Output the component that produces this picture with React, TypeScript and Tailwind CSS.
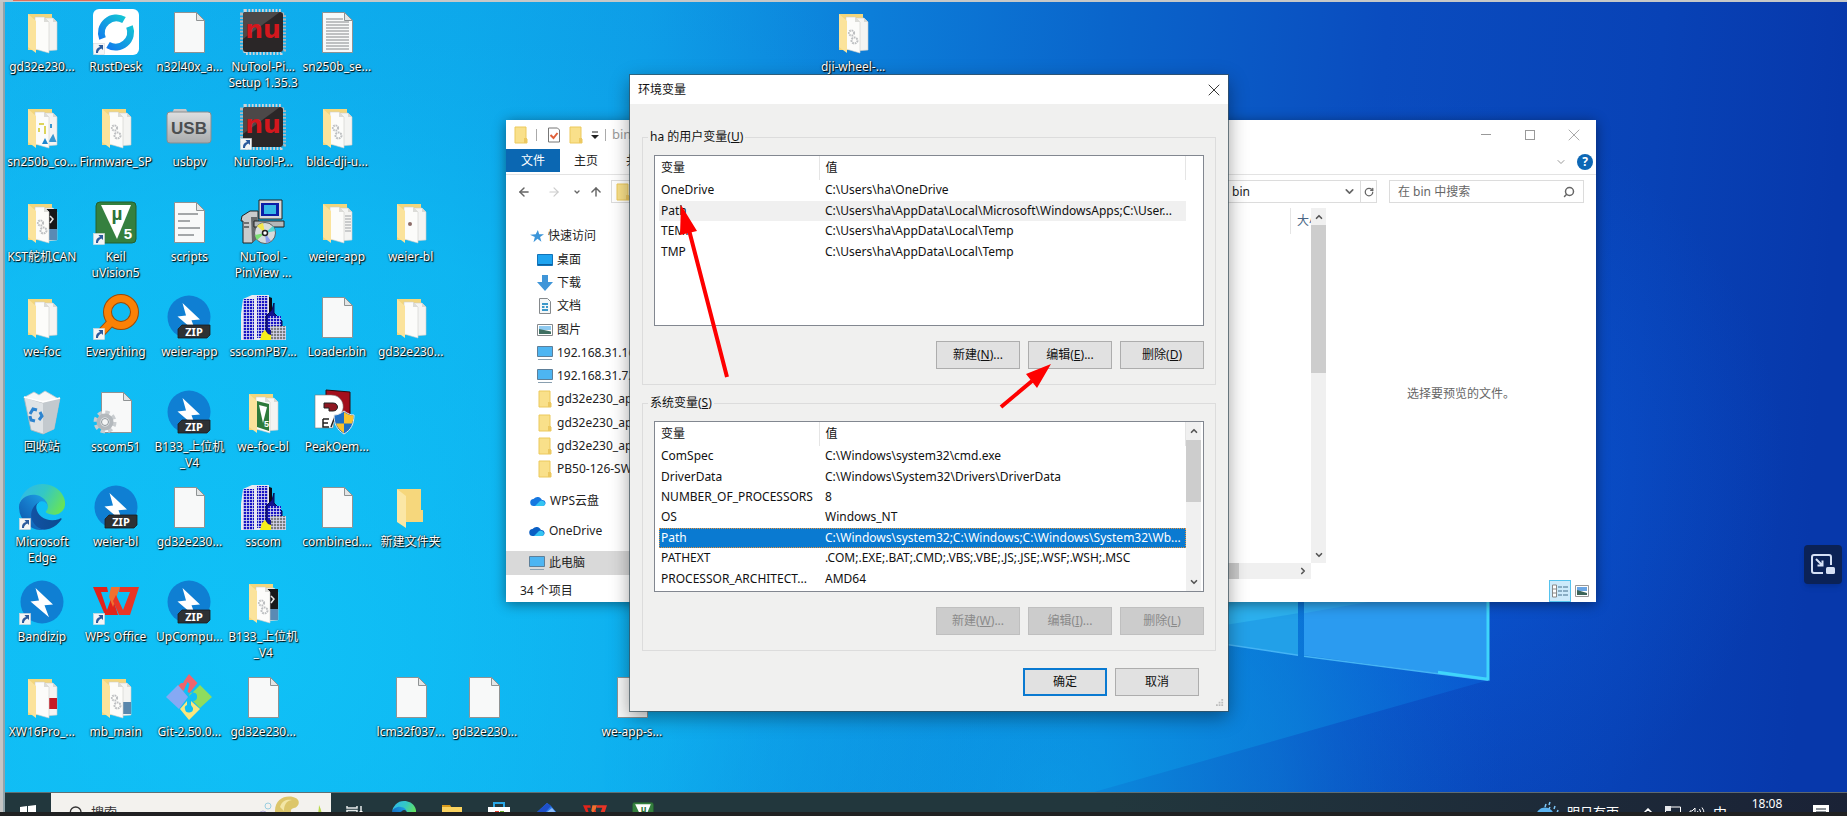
import { useState } from 'react'
import type { ReactNode } from 'react'
import clsx from 'clsx'
import { ArrowLeft, ArrowRight, ArrowUp, ChevronDown, ChevronRight, ChevronUp, RotateCw, Search, X } from 'lucide-react'

type IconKind =
  | 'folder' | 'folderCode' | 'folderGears' | 'folderDark' | 'folderText' | 'folderDot'
  | 'folderKeil' | 'folderRed' | 'folderBlue' | 'folderEmpty' | 'file' | 'textFile' | 'scriptFile'
  | 'gearFile' | 'rustdesk' | 'chip' | 'usb' | 'keil' | 'setup' | 'everything' | 'bandizip' | 'zip'
  | 'city' | 'bin' | 'peak' | 'edge' | 'wps' | 'git'

interface DesktopItem {
  col: number
  row: number
  icon: IconKind
  label: string
  shortcut?: boolean
}

interface Variable {
  name: string
  value: string
}

const desktopItems: DesktopItem[] = [
  { col: 1, row: 1, icon: 'folder', label: 'gd32e230...' },
  { col: 2, row: 1, icon: 'rustdesk', label: 'RustDesk', shortcut: true },
  { col: 3, row: 1, icon: 'file', label: 'n32l40x_a...' },
  { col: 4, row: 1, icon: 'chip', label: 'NuTool-Pi...\nSetup 1.35.3' },
  { col: 5, row: 1, icon: 'textFile', label: 'sn250b_se...' },
  { col: 12, row: 1, icon: 'folderGears', label: 'dji-wheel-...' },
  { col: 1, row: 2, icon: 'folderCode', label: 'sn250b_co...' },
  { col: 2, row: 2, icon: 'folderGears', label: 'Firmware_SP' },
  { col: 3, row: 2, icon: 'usb', label: 'usbpv' },
  { col: 4, row: 2, icon: 'chip', label: 'NuTool-P...', shortcut: true },
  { col: 5, row: 2, icon: 'folderGears', label: 'bldc-dji-u...' },
  { col: 1, row: 3, icon: 'folderDark', label: 'KST舵机CAN' },
  { col: 2, row: 3, icon: 'keil', label: 'Keil\nuVision5', shortcut: true },
  { col: 3, row: 3, icon: 'scriptFile', label: 'scripts' },
  { col: 4, row: 3, icon: 'setup', label: 'NuTool -\nPinView ...' },
  { col: 5, row: 3, icon: 'folderText', label: 'weier-app' },
  { col: 6, row: 3, icon: 'folderDot', label: 'weier-bl' },
  { col: 1, row: 4, icon: 'folder', label: 'we-foc' },
  { col: 2, row: 4, icon: 'everything', label: 'Everything', shortcut: true },
  { col: 3, row: 4, icon: 'zip', label: 'weier-app' },
  { col: 4, row: 4, icon: 'city', label: 'sscomPB7...' },
  { col: 5, row: 4, icon: 'file', label: 'Loader.bin' },
  { col: 6, row: 4, icon: 'folder', label: 'gd32e230...' },
  { col: 1, row: 5, icon: 'bin', label: '回收站' },
  { col: 2, row: 5, icon: 'gearFile', label: 'sscom51' },
  { col: 3, row: 5, icon: 'zip', label: 'B133_上位机\n_V4' },
  { col: 4, row: 5, icon: 'folderKeil', label: 'we-foc-bl' },
  { col: 5, row: 5, icon: 'peak', label: 'PeakOem...' },
  { col: 1, row: 6, icon: 'edge', label: 'Microsoft\nEdge', shortcut: true },
  { col: 2, row: 6, icon: 'zip', label: 'weier-bl' },
  { col: 3, row: 6, icon: 'file', label: 'gd32e230...' },
  { col: 4, row: 6, icon: 'city', label: 'sscom' },
  { col: 5, row: 6, icon: 'file', label: 'combined....' },
  { col: 6, row: 6, icon: 'folderEmpty', label: '新建文件夹' },
  { col: 1, row: 7, icon: 'bandizip', label: 'Bandizip', shortcut: true },
  { col: 2, row: 7, icon: 'wps', label: 'WPS Office', shortcut: true },
  { col: 3, row: 7, icon: 'zip', label: 'UpCompu...' },
  { col: 4, row: 7, icon: 'folderDark', label: 'B133_上位机\n_V4' },
  { col: 1, row: 8, icon: 'folderRed', label: 'XW16Pro_...' },
  { col: 2, row: 8, icon: 'folderBlue', label: 'mb_main' },
  { col: 3, row: 8, icon: 'git', label: 'Git-2.50.0...' },
  { col: 4, row: 8, icon: 'file', label: 'gd32e230...' },
  { col: 6, row: 8, icon: 'file', label: 'lcm32f037...' },
  { col: 7, row: 8, icon: 'file', label: 'gd32e230...' },
  { col: 9, row: 8, icon: 'file', label: 'we-app-s...' },
]

const userVariables: Variable[] = [
  { name: 'OneDrive', value: 'C:\\Users\\ha\\OneDrive' },
  { name: 'Path', value: 'C:\\Users\\ha\\AppData\\Local\\Microsoft\\WindowsApps;C:\\User...' },
  { name: 'TEMP', value: 'C:\\Users\\ha\\AppData\\Local\\Temp' },
  { name: 'TMP', value: 'C:\\Users\\ha\\AppData\\Local\\Temp' },
]

const systemVariables: Variable[] = [
  { name: 'ComSpec', value: 'C:\\Windows\\system32\\cmd.exe' },
  { name: 'DriverData', value: 'C:\\Windows\\System32\\Drivers\\DriverData' },
  { name: 'NUMBER_OF_PROCESSORS', value: '8' },
  { name: 'OS', value: 'Windows_NT' },
  { name: 'Path', value: 'C:\\Windows\\system32;C:\\Windows;C:\\Windows\\System32\\Wb...' },
  { name: 'PATHEXT', value: '.COM;.EXE;.BAT;.CMD;.VBS;.VBE;.JS;.JSE;.WSF;.WSH;.MSC' },
  { name: 'PROCESSOR_ARCHITECT...', value: 'AMD64' },
]

/* ---------- desktop icons, all drawn on a 46 x 46 canvas ---------- */

function FolderArt({ children, second }: { children?: ReactNode; second?: ReactNode }) {
  return (
    <>
      <path d="M9 5h24v36H9z" fill="#f3d67c" />
      <path d="M26 9h8l4 4v28l-12 1z" fill="#f4f4f2" stroke="#cfcfca" strokeWidth=".6" />
      <path d="M34 9v4h4z" fill="#d8d8d4" />
      {second}
      <path d="M16 8h9l5 5v31l-14-4z" fill="#fcfcfa" stroke="#cfcfca" strokeWidth=".6" />
      <path d="M25 8v5h5z" fill="#dcdcd8" />
      {children}
      <path d="M9 5l8 7v32l-8-6z" fill="#fbe39b" />
    </>
  )
}

function Gears() {
  return (
    <g fill="none" stroke="#bdbfc1" strokeWidth="2">
      <circle cx="21.500" cy="24" r="2.600" strokeDasharray="1.600 .8" />
      <circle cx="24.500" cy="31.500" r="3" strokeDasharray="1.800 .8" />
    </g>
  )
}

function Sheet({ children }: { children?: ReactNode }) {
  return (
    <>
      <path d="M8.500 3.500h22l8 8v32h-30z" fill="#f8f9f9" stroke="#8f9394" strokeWidth="1" />
      <path d="M30.500 3.500v8h8z" fill="#e3e5e5" stroke="#8f9394" strokeWidth="1" />
      {children}
    </>
  )
}

function Bolt({ zip }: { zip?: boolean }) {
  return (
    <>
      <circle cx="23" cy="23" r="21.500" fill="#0f7fd3" />
      <path d="M16.500 9L34 25.500l-8.500.8 4.500 12-18.500-15.800 8.500-1z" fill="#fff" />
      {zip && (
        <>
          <path d="M16 31h28v10l-3 3H12v-9z" fill="#2e3134" stroke="#1b1d1f" strokeWidth=".8" />
          <text x="28" y="41.500" textAnchor="middle" fill="#fff" fontSize="11" fontWeight="700" fontFamily="Noto Sans">ZIP</text>
        </>
      )}
    </>
  )
}

function KeilArt() {
  return (
    <>
      <rect x="3" y="3" width="40" height="41" rx="4" fill="#35803f" stroke="#245f2e" />
      <path d="M8 6h30L24 40z" fill="#fff" />
      <text x="24" y="21" textAnchor="middle" fill="#2c7438" fontSize="19" fontWeight="700" fontFamily="Liberation Sans">µ</text>
      <text x="35" y="40" textAnchor="middle" fill="#fff" fontSize="15" fontWeight="700" fontFamily="Liberation Sans">5</text>
    </>
  )
}

function EdgeArt() {
  return (
    <g transform="scale(.18)">
      <defs>
        <linearGradient id="edge-dark" x1="0" y1="0" x2="1" y2="0">
          <stop offset="0" stopColor="#1253a5" />
          <stop offset="1" stopColor="#0c4a8f" />
        </linearGradient>
        <linearGradient id="edge-mid" x1=".9" y1=".2" x2=".2" y2="1">
          <stop offset="0" stopColor="#1b9de2" />
          <stop offset=".5" stopColor="#1577c8" />
          <stop offset="1" stopColor="#0d59ae" />
        </linearGradient>
        <linearGradient id="edge-top" x1="0" y1=".2" x2="1" y2=".6">
          <stop offset="0" stopColor="#2fb9ea" />
          <stop offset=".5" stopColor="#34c8c4" />
          <stop offset="1" stopColor="#66e35a" />
        </linearGradient>
      </defs>
      <path fill="url(#edge-dark)" d="M231 190.500c-3.400 1.800-6.900 3.400-10.500 4.700a101.700 101.700 0 0 1-35.900 6.400c-47.300 0-88.500-32.500-88.500-74.300 0-11.700 6.400-21.900 16.500-27.400-42.800 1.800-53.800 46.400-53.800 72.500 0 74 68.100 81.400 82.800 81.400 7.900 0 19.800-2.300 27-4.600l1.300-.4a128.300 128.300 0 0 0 66.600-52.800 4 4 0 0 0-5.500-5.500z" />
      <path fill="url(#edge-mid)" d="M105.700 241.400a79.200 79.200 0 0 1-22.700-21.300 80.700 80.700 0 0 1 29.500-120c3.200-1.500 8.500-4.100 15.600-4a32.400 32.400 0 0 1 25.700 13 31.900 31.900 0 0 1 6.300 18.700c0-.2 24.500-79.600-80-79.600-43.900 0-80 41.700-80 78.200a130.200 130.200 0 0 0 12.100 56 128 128 0 0 0 156.400 67 75.500 75.500 0 0 1-62.800-8z" />
      <path fill="url(#edge-top)" d="M152.300 148.900c-.9 1-3.400 2.500-3.400 5.600 0 2.600 1.700 5.200 4.800 7.300 14.300 10 41.400 8.600 41.500 8.600 10.700 0 21.100-2.900 30.300-8.300a61.400 61.400 0 0 0 30.400-52.900c.3-22.400-8-37.300-11.300-43.900C223.500 23.900 177.700 0 128 0A128 128 0 0 0 0 126.200c.5-36.500 36.800-66 80-66 3.500 0 23.500.3 42 10.100a72.600 72.600 0 0 1 30.900 29.300c6.100 10.600 7.200 24.100 7.200 29.500s-2.700 13.300-7.800 19.900z" />
    </g>
  )
}

function WpsArt() {
  return (
    <>
      <path d="M0 8h14l1 5H8l6 18 5-14 6 19H12z" fill="#e2231a" />
      <path d="M18 8h9l-7 20-4-10z" fill="#f2702f" />
      <path d="M27 8h19l-9 28H26l-6-14 3-6 7 15 7-18H26z" fill="#e93526" />
    </>
  )
}

function Tower({ x, y, w, h }: { x: number; y: number; w: number; h: number }) {
  return (
    <>
      <rect x={x} y={y} width={w} height={h} fill="#1714c4" />
      <rect x={x} y={y} width={w} height={h} fill="url(#city-windows)" />
    </>
  )
}

function renderArt(kind: IconKind) {
  switch (kind) {
    case 'folder':
      return <FolderArt />
    case 'folderCode':
      return (
        <FolderArt second={<path d="M32 20v4M31 37l3-5 2 5z" stroke="#3b97d0" fill="#3b97d0" strokeWidth="2" />}>
          <path d="M20 20h5M20 24v4M26 22v8" stroke="#ddd45a" strokeWidth="2" fill="none" />
          <path d="M23 40l3-6 3 6z" fill="#1d87cf" />
        </FolderArt>
      )
    case 'folderGears':
      return <FolderArt><Gears /></FolderArt>
    case 'folderDark':
      return (
        <FolderArt
          second={
            <>
              <path d="M24 10h14v20H24z" fill="#17181a" />
              <path d="M28 30h10v11H28z" fill="#5a8ab4" />
              <path d="M31 17l3 3-3 4" fill="none" stroke="#e8e8e8" strokeWidth="1.500" />
            </>
          }
        >
          <Gears />
        </FolderArt>
      )
    case 'folderText':
      return <FolderArt second={<path d="M31 17h6M31 20h6M31 23h6M31 26h6M31 29h6M31 32h6" stroke="#9fa2a5" />} />
    case 'folderDot':
      return <FolderArt><circle cx="22" cy="25" r="2" fill="#8d6d68" /></FolderArt>
    case 'folderKeil':
      return (
        <FolderArt>
          <path d="M17 12l12 3v27l-12-4z" fill="#2d7a3b" />
          <path d="M19 16l8 2-4 16z" fill="#fff" />
          <text x="24" y="38" fill="#fff" fontSize="9" fontWeight="700" fontFamily="Liberation Sans">5</text>
        </FolderArt>
      )
    case 'folderRed':
      return <FolderArt second={<path d="M27 24h11v11H27z" fill="#c61a24" />} />
    case 'folderBlue':
      return (
        <FolderArt second={<path d="M29 28h9v12h-9z" fill="#5a87ac" />}>
          <Gears />
        </FolderArt>
      )
    case 'folderEmpty':
      return (
        <>
          <path d="M9 5h24v21h2v12H18z" fill="#f6d77c" />
          <path d="M9 5l9 7v32l-9-6z" fill="#fbe7a5" />
        </>
      )
    case 'file':
      return <Sheet />
    case 'textFile':
      return <Sheet><path d="M12 10h17M12 13h23M12 16h23M12 19h23M12 22h23M12 25h23M12 28h23M12 31h23M12 34h23M12 37h23M12 40h23" stroke="#85888b" /></Sheet>
    case 'scriptFile':
      return <Sheet><path d="M12 15h20M12 22h12M12 29h22M12 36h16" stroke="#a4a7a9" strokeWidth="2" /></Sheet>
    case 'gearFile':
      return (
        <Sheet>
          <circle cx="12" cy="33" r="9" fill="none" stroke="#c9cdd0" strokeWidth="5" strokeDasharray="4 3.070" />
          <circle cx="12" cy="33" r="6.500" fill="#eef0f1" stroke="#b4b9bd" strokeWidth="4" />
          <circle cx="12" cy="33" r="3.500" fill="#f4f5f5" stroke="#8f969b" />
        </Sheet>
      )
    case 'rustdesk':
      return (
        <>
          <defs>
            <linearGradient id="rust-ring" x1="0" y1="1" x2="1" y2="0">
              <stop offset="0" stopColor="#1173f0" />
              <stop offset="1" stopColor="#14cdd2" />
            </linearGradient>
          </defs>
          <rect width="46" height="46" rx="6" fill="#fff" />
          <path d="M31 10.500A15 15 0 0 0 9.500 29M15 35.500A15 15 0 0 0 36.500 17" transform="translate(0 .5)" fill="none" stroke="url(#rust-ring)" strokeWidth="7" />
        </>
      )
    case 'chip':
      return (
        <>
          <rect x="5" y="1.500" width="36" height="43" fill="none" stroke="#cfd3d6" strokeWidth="3" strokeDasharray="1.800 1.600" />
          <rect x="1.500" y="5" width="43" height="36" fill="none" stroke="#b4b8ba" strokeWidth="3" strokeDasharray="1.800 1.600" />
          <rect x="3" y="3" width="40" height="40" rx="3" fill="#2a2627" />
          <path d="M3 6q0-3 3-3h34L3 30z" fill="#4c4848" />
          <text x="23" y="29" textAnchor="middle" fill="#d3171d" fontSize="25" fontWeight="700" fontFamily="DejaVu Sans">nu</text>
        </>
      )
    case 'usb':
      return (
        <>
          <defs>
            <linearGradient id="usb-body" x1="0" y1="0" x2="0" y2="1">
              <stop offset="0" stopColor="#dedfe0" />
              <stop offset="1" stopColor="#a8abad" />
            </linearGradient>
          </defs>
          <path d="M6 9l2-4h12l2 4z" fill="#c6c8c9" />
          <rect x="1" y="8" width="44" height="31" rx="3" fill="url(#usb-body)" stroke="#8a8d8f" />
          <text x="23" y="30" textAnchor="middle" fill="#4b4e50" fontSize="17" fontWeight="700" fontFamily="Liberation Sans">USB</text>
        </>
      )
    case 'keil':
      return <KeilArt />
    case 'setup':
      return (
        <>
          <path d="M2 17l8-5h8v26l-6 6H3V22H1z" fill="#c9cbcc" stroke="#222" />
          <path d="M11 18h6v22l-5 4z" fill="#66696b" />
          <path d="M4 24h5M4 28h5" stroke="#6d7173" strokeWidth="2" />
          <path d="M19 1h23v19H19z" fill="#d7d9da" stroke="#222" />
          <path d="M21 4h18v13H21z" fill="#0b1fa8" />
          <path d="M24 6h12v9H24z" fill="#35b8e8" />
          <path d="M14 22h30v6H14z" fill="#b5b8b9" stroke="#222" />
          <circle cx="25" cy="34" r="10.500" fill="#d7dcdc" stroke="#5c6062" />
          <path d="M25 34L17 27a10 10 0 0 1 6-3z" fill="#f1e64e" />
          <path d="M25 34l8-7a10 10 0 0 1 2 5z" fill="#58d6cf" />
          <path d="M25 34l-8 7a10 10 0 0 1-2-5z" fill="#7ce072" />
          <path d="M25 34l6 8a10 10 0 0 1-5 2z" fill="#8a9fee" />
          <circle cx="25" cy="34" r="2.500" fill="#fff" stroke="#222" strokeWidth="1.500" />
        </>
      )
    case 'everything':
      return (
        <>
          <path d="M20 26L6 41" stroke="#9a4a08" strokeWidth="9" />
          <circle cx="28" cy="18" r="13.500" fill="none" stroke="#9a4a08" strokeWidth="9" />
          <path d="M20 26L6 41" stroke="#fb8106" strokeWidth="7" />
          <circle cx="28" cy="18" r="13.500" fill="none" stroke="#fb8106" strokeWidth="7" />
        </>
      )
    case 'bandizip':
      return <Bolt />
    case 'zip':
      return <Bolt zip />
    case 'city':
      return (
        <>
          <defs>
            <pattern id="city-windows" width="3" height="3" patternUnits="userSpaceOnUse">
              <path d="M0 .5h3M.5 0v3" stroke="#d9dbf0" strokeWidth=".8" />
            </pattern>
          </defs>
          <path d="M27 2l5 2v42H27z" fill="#0a0a14" />
          <path d="M3 5l9-4h17v45H1V20z" fill="#e8e8f2" />
          <Tower x={3} y={5} w={11} h={41} />
          <Tower x={17} y={2} w={11} h={42} />
          <path d="M34 9v10l8 8v19H26V22l6-6z" fill="#15128f" stroke="#0a0a4c" />
          <Tower x={28} y={22} w={13} h={14} />
          <rect x="31" y="32" width="15" height="14" fill="#7b7d80" />
          <rect x="31" y="32" width="15" height="14" fill="url(#city-windows)" />
          <path d="M20 46l2-7 3-3 3 4 3 1v5z" fill="#f5ee1a" />
        </>
      )
    case 'bin':
      return (
        <>
          <path d="M6 8l9-5 5 3 6-4 7 4 5 3-3 6H9z" fill="#f7f7f7" stroke="#c3c8cc" strokeWidth=".8" />
          <path d="M5 8l7 33 12 4 11-5 6-31-17 5z" fill="#dfe3e6" stroke="#b0b6bb" strokeWidth=".8" />
          <path d="M24 14v31l11-5 6-31z" fill="#c3c9ce" />
          <path d="M5 8l19 5 17-4" fill="none" stroke="#fff" strokeWidth="1.500" />
          <g fill="none" stroke="#2d84cf" strokeWidth="3">
            <path d="M11 25l3-5 4 1M21 23l2 4-3 4M16 32l-4-1-1-4" />
          </g>
        </>
      )
    case 'peak':
      return (
        <>
          <path d="M12 1l24 2v27H12z" fill="#a30f1c" stroke="#2b0b0e" />
          <path d="M1 6h16c15 0 16 20 4 22l-2 11H1z" fill="#fff" stroke="#7a7a7a" strokeWidth=".6" />
          <path d="M10 14h9c6 0 6 8 0 8h-4v-3h-5z" fill="#8f1822" stroke="#222" />
          <path d="M9 30h6M9 30v8h6M9 34h5M17 38l3-8 4 8" fill="none" stroke="#222" strokeWidth="1.500" />
          <path d="M30 22c4 3 7 4 10 4 0 9-3 15-10 19-7-4-10-10-10-19 3 0 6-1 10-4z" fill="#1f6fc4" stroke="#e6e8ea" />
          <path d="M30 23c4 3 6 3 9.500 3.500q0 4-1.500 8H30zM30 34.500V44q-6-4-8-9.500z" fill="#fbc12d" />
        </>
      )
    case 'edge':
      return <EdgeArt />
    case 'wps':
      return <WpsArt />
    case 'git':
      return (
        <>
          <path d="M23 0l8.500 9-8 10-2-1 2-8-2-2-4 9-2.500-2 3-8z" fill="#f0646d" />
          <path d="M15 9l-3 3 4 4 3-7z" fill="#f0646d" />
          <path d="M12 11l10 12-9 12L0 23z" fill="#86a9f4" />
          <path d="M34 11l12 12-12 11-7-7q4 0 4-4a4 4 0 0 0-8-1z" fill="#8fdc5e" />
          <path d="M14 35l7-8v4q-3 1-2 4a4 4 0 0 0 8-1l-2-3v-4l9 8-11 11z" fill="#fbe67c" />
        </>
      )
  }
}

function Glyph({ kind, shortcut, className }: { kind: IconKind; shortcut?: boolean; className: string }) {
  return (
    <svg viewBox="0 0 46 46" className={className} aria-hidden="true">
      {renderArt(kind)}
      {shortcut && (
        <>
          <rect x=".5" y="34.500" width="11" height="11" fill="#f4f5f6" stroke="#d5d8da" strokeWidth=".6" />
          <path d="M3 44q-.5-5 4-6L5.500 36H10v5L8.500 39.500Q5 41 5 44z" fill="#2c5a9c" />
        </>
      )}
    </svg>
  )
}

function Wallpaper() {
  return (
    <svg className="absolute inset-0 h-full w-full" viewBox="0 0 1842 791" preserveAspectRatio="none" aria-hidden="true">
      <defs>
        <linearGradient id="wall" x1="0" y1="0" x2="1" y2=".03">
          <stop offset="0" stopColor="#11b4f0" />
          <stop offset=".25" stopColor="#0da7ea" />
          <stop offset=".35" stopColor="#0e9ce6" />
          <stop offset=".47" stopColor="#0c7ed9" />
          <stop offset=".6" stopColor="#0a65cb" />
          <stop offset=".75" stopColor="#0a4cbf" />
          <stop offset=".9" stopColor="#0842b6" />
          <stop offset="1" stopColor="#0738ab" />
        </linearGradient>
        <radialGradient id="glow" gradientUnits="userSpaceOnUse" cx="250" cy="640" r="850">
          <stop offset="0" stopColor="#10c8fa" stopOpacity=".75" />
          <stop offset=".5" stopColor="#10c4f8" stopOpacity=".5" />
          <stop offset="1" stopColor="#0c9ae6" stopOpacity="0" />
        </radialGradient>
        <radialGradient id="haze" gradientUnits="userSpaceOnUse" cx="1400" cy="470" r="380">
          <stop offset="0" stopColor="#0b60e4" stopOpacity=".7" />
          <stop offset="1" stopColor="#0b58d8" stopOpacity="0" />
        </radialGradient>
        <radialGradient id="floor" gradientUnits="userSpaceOnUse" cx="1050" cy="791" r="450">
          <stop offset="0" stopColor="#0b94e2" stopOpacity=".9" />
          <stop offset=".5" stopColor="#0b80d8" stopOpacity=".55" />
          <stop offset="1" stopColor="#0a5cc8" stopOpacity="0" />
        </radialGradient>
        <linearGradient id="beam" gradientUnits="userSpaceOnUse" x1="1100" y1="760" x2="1483" y2="670">
          <stop offset="0" stopColor="#0b9ae6" />
          <stop offset=".5" stopColor="#0b88de" />
          <stop offset="1" stopColor="#0a60d8" />
        </linearGradient>
      </defs>
      <rect width="1842" height="791" fill="url(#wall)" />
      <rect width="1842" height="791" fill="url(#haze)" />
      <rect width="1842" height="791" fill="url(#floor)" />
      <path d="M1483 679L1089 791H600V560h883z" fill="url(#beam)" opacity=".6" />
      <rect width="1842" height="791" fill="url(#glow)" />
      <path d="M1200 560h93v94l-93-14z" fill="#22a0e8" />
      <path d="M1200 560h93v52l-93 15z" fill="#2cb0ee" />
      <path d="M1299 560h184v119l-184-25z" fill="#2b9bf0" />
      <path d="M1299 598v14l80-14z" fill="#2fa8f2" />
      <path d="M1200 640l93 14M1299 655l184 24" fill="none" stroke="#45b4f5" strokeWidth="1.500" />
      <path d="M1483 590v88l-50-7" fill="none" stroke="#3fd5fb" strokeWidth="3" />
    </svg>
  )
}

/* ---------- file explorer ---------- */

function FolderMini() {
  return (
    <svg viewBox="0 0 14 18" className="h-[18px] w-3.5 shrink-0" aria-hidden="true">
      <path d="M1 1h11v12h1v4H1z" fill="#f9e08a" stroke="#ecc95c" />
      <path d="M10 12h3v5h-3z" fill="#ecc860" />
    </svg>
  )
}

function MonitorMini() {
  return (
    <svg viewBox="0 0 16 16" className="size-4 shrink-0" aria-hidden="true">
      <path d="M.5 1.500h15v10H.5z" fill="#4db5f2" stroke="#5d7f99" />
      <path d="M1 14.500h14" stroke="#8aa0b0" />
    </svg>
  )
}

function CloudMini({ color }: { color: string }) {
  return (
    <svg viewBox="0 0 16 12" className="h-3 w-4 shrink-0" aria-hidden="true">
      <path d="M4 11a3.500 3.500 0 0 1-.5-7A5 5 0 0 1 12 5a3 3 0 0 1 1 6z" fill={color} />
      <path d="M5 11l5-5a3.500 3.500 0 0 1 5 2.500c0 2-1.500 2.500-2.500 2.500z" fill="#35c4f2" />
    </svg>
  )
}

function Magnifier({ className }: { className: string }) {
  return <Search strokeWidth={3} className={clsx('-scale-x-100', className)} />
}

const places: { label: string; icon: ReactNode }[] = [
  {
    label: '桌面',
    icon: (
      <svg viewBox="0 0 16 16" className="size-4 shrink-0">
        <path d="M.5 2.500h15v11H.5z" fill="#1fa4f0" stroke="#1273b8" />
        <path d="M1 12.500h14" stroke="#0b5f9f" />
      </svg>
    ),
  },
  {
    label: '下载',
    icon: (
      <svg viewBox="0 0 16 16" className="size-4 shrink-0">
        <path d="M5 0h6v7h5l-8 9-8-9h5z" fill="#3f95d8" />
      </svg>
    ),
  },
  {
    label: '文档',
    icon: (
      <svg viewBox="0 0 16 16" className="size-4 shrink-0">
        <path d="M2.500.5h8l3 3v12h-11z" fill="#f4f7f8" stroke="#85898c" />
        <path d="M5 6h6M5 9h2.500M9 9h2M5 12h6" stroke="#3b97c9" strokeWidth="2" />
      </svg>
    ),
  },
  {
    label: '图片',
    icon: (
      <svg viewBox="0 0 16 16" className="size-4 shrink-0">
        <path d="M.5 2.500h15v11H.5z" fill="#fff" stroke="#85898c" />
        <path d="M2 4h12v4H2z" fill="#8fcaf0" />
        <path d="M2 7l5 1 7 1.500V12H2z" fill="#3f6f62" />
      </svg>
    ),
  },
  { label: '192.168.31.16', icon: <MonitorMini /> },
  { label: '192.168.31.72', icon: <MonitorMini /> },
  { label: 'gd32e230_ap', icon: <FolderMini /> },
  { label: 'gd32e230_ap', icon: <FolderMini /> },
  { label: 'gd32e230_ap', icon: <FolderMini /> },
  { label: 'PB50-126-SW', icon: <FolderMini /> },
]

function Explorer() {
  return (
    <section className="absolute top-[118px] left-[501px] flex h-[482px] w-[1090px] flex-col bg-white text-xs text-[#222] shadow-[0_2px_12px_rgba(0,0,0,0.45)]">
      <div className="flex h-[29px] shrink-0 items-center pl-2 text-[#999]">
        <FolderMini />
        <span className="ml-2 h-3 w-px bg-[#aaa]" />
        <svg viewBox="0 0 14 16" className="ml-2.5 h-4 w-3.5" aria-hidden="true">
          <path d="M1.500 1h9l2 2v12h-11z" fill="#fff" stroke="#777" />
          <path d="M3.500 8l3 3 4-5" fill="none" stroke="#e0603a" strokeWidth="2" />
        </svg>
        <span className="w-2" />
        <FolderMini />
        <svg viewBox="0 0 8 8" className="ml-2 size-2" aria-hidden="true">
          <path d="M1 1h6" stroke="#222" />
          <path d="M0 4h8L4 8z" fill="#222" />
        </svg>
        <span className="ml-1.5 h-3 w-px bg-[#aaa]" />
        <span className="ml-1.5 text-[13px]">bin</span>
        <div className="ml-auto flex items-center gap-6 pr-3 text-[#999]">
          <button aria-label="Minimize" className="grid size-5 place-items-center"><span className="h-px w-2.5 bg-current" /></button>
          <button aria-label="Maximize" className="grid size-5 place-items-center"><span className="size-2.5 border border-current" /></button>
          <button aria-label="Close" className="grid size-5 place-items-center"><X size={20} strokeWidth={1} /></button>
        </div>
      </div>
      <div className="flex h-[26px] shrink-0 items-start border-b border-[#e3e3e3]">
        <button className="h-[23px] w-[54px] bg-[#0b67b2] text-white">文件</button>
        <button className="h-[23px] w-[52px]">主页</button>
        <button className="h-[23px] w-[52px]">共享</button>
        <div className="ml-auto flex h-[25px] items-center gap-2.5 pr-[3px]">
          <ChevronDown size={12} className="text-[#999]" />
          <span className="grid size-4 place-items-center rounded-full bg-[#0d67b5] text-xs font-bold text-white">?</span>
        </div>
      </div>
      <div className="flex h-[33px] shrink-0 items-center pr-3 pl-[11px] text-[#666]">
        <button aria-label="Back"><ArrowLeft size={14} strokeWidth={2.500} /></button>
        <button aria-label="Forward" className="ml-4 text-[#ccc]"><ArrowRight size={14} /></button>
        <button aria-label="Recent" className="ml-3"><ChevronDown size={8} strokeWidth={4} /></button>
        <button aria-label="Up" className="ml-2"><ArrowUp size={14} strokeWidth={2.500} /></button>
        <div className="ml-2 flex h-[23px] flex-1 items-center border border-[#dcdcdc] pl-1">
          <FolderMini />
          <div className="ml-auto flex h-full w-[144px] items-center">
            <span className="text-[#222]">bin</span>
            <ChevronDown size={13} strokeWidth={3} className="ml-auto" />
            <button aria-label="Refresh" className="ml-1 grid h-full w-4 place-items-center border-l border-[#dcdcdc]">
              <RotateCw size={10} strokeWidth={3} />
            </button>
          </div>
        </div>
        <label className="ml-3 flex h-[23px] w-[195px] items-center border border-[#dcdcdc] px-2">
          <input aria-label="搜索" placeholder="在 bin 中搜索" className="min-w-0 flex-1 outline-none placeholder:text-[#666]" />
          <Magnifier className="size-3" />
        </label>
      </div>
      <div className="flex min-h-0 flex-1">
        <nav className="w-[240px] shrink-0 pt-4">
          <div className="flex h-6 items-center gap-1 pl-6">
            <svg viewBox="0 0 16 16" className="size-3.5" aria-hidden="true">
              <path d="M9 1l1.500 5H16l-4.500 3 1.500 5.500L8.500 11 4 15l1.500-6L0 6.500 6.500 6z" fill="#3b95d9" />
            </svg>
            快速访问
          </div>
          <ul className="grid h-[233px] auto-rows-fr">
            {places.map((place, i) => (
              <li key={i} className="flex items-center gap-1 pl-[31px] whitespace-nowrap">
                <span className="grid w-4 place-items-center">{place.icon}</span>
                {place.label}
              </li>
            ))}
          </ul>
          <div className="mt-2 flex h-6 items-center gap-1 pl-6"><CloudMini color="#1677e0" />WPS云盘</div>
          <div className="mt-1.5 flex h-6 items-center gap-1 pl-[23px]"><CloudMini color="#0a5fc4" />OneDrive</div>
          <div className="mt-2 flex h-6 items-center gap-1 bg-[#d9d9d9] pl-[23px]"><MonitorMini />此电脑</div>
        </nav>
        <div className="flex min-w-0 flex-1 flex-col">
          <div className="flex min-h-0 flex-1">
            <div className="min-w-0 flex-1 overflow-hidden">
              <div className="ml-auto h-[26px] w-[21px] overflow-hidden border-l border-[#e5e5e5] pl-1.5 leading-[26px] whitespace-nowrap text-[#4a6585]">大小</div>
            </div>
            <div className="flex w-[15px] flex-col items-center bg-[#f0f0f0] text-[#555]">
              <span className="grid h-[17px] place-items-center"><ChevronUp size={10} strokeWidth={4} /></span>
              <span className="h-[148px] w-full bg-[#cdcdcd]" />
              <span className="mt-auto grid h-4 place-items-center"><ChevronDown size={10} strokeWidth={4} /></span>
            </div>
          </div>
          <div className="mr-[15px] mb-px flex h-[16px] items-center justify-end bg-[#f0f0f0] text-[#555]">
            <span className="mr-auto h-full w-[493px] bg-[#cdcdcd]" />
            <span className="grid w-4 place-items-center"><ChevronRight size={10} strokeWidth={4} /></span>
          </div>
        </div>
        <div className="w-[270px] shrink-0 pt-[178px] text-center text-[#666]">选择要预览的文件。</div>
      </div>
      <div className="flex h-[22px] shrink-0 items-center pr-[7px] pl-3.5">
        <span>34 个项目</span>
        <button aria-label="详细信息" className="ml-auto grid h-[22px] w-[22px] place-items-center border border-[#55c3ee] bg-[#cdeafb]">
          <svg viewBox="0 0 16 14" className="h-3.5 w-4">
            <path d="M.5 1h4v12h-4zM.5 5h4M.5 9h4" fill="#fff" stroke="#888" />
            <path d="M6 3h4M11 3h5M6 7h4M11 7h5M6 11h4M11 11h5" stroke="#47708c" />
          </svg>
        </button>
        <button aria-label="缩略图" className="ml-1 grid h-[22px] w-[14px] place-items-center">
          <svg viewBox="0 0 14 12" className="h-3 w-3.5">
            <path d="M.5.5h13v11H.5z" fill="#fff" stroke="#999" />
            <path d="M2 2h10v4H2z" fill="#6ba6e4" />
            <path d="M2 5l10 3v2H2z" fill="#3c6458" />
          </svg>
        </button>
      </div>
    </section>
  )
}

/* ---------- environment variables dialog ---------- */

interface VariableTableProps {
  label: string
  rows: Variable[]
  initial: number
  focused?: boolean
}

function VariableTable({ label, rows, initial, focused = false }: VariableTableProps) {
  const [selected, setSelected] = useState(initial)

  return (
    <div className="mt-2.5 flex h-[171px] border border-[#828790] bg-white">
      <div className="min-w-0 flex-1 pl-1">
        <table aria-label={label} className={clsx('w-full table-fixed border-collapse text-left leading-4', focused ? 'h-[167px]' : 'h-[106px]')}>
          <thead>
            <tr className="h-6">
              <th scope="col" className="w-[160px] border-r border-[#e5e5e5] pl-0.5 font-normal">变量</th>
              <th scope="col" className="border-r border-[#e5e5e5] pl-1.5 font-normal">值</th>
            </tr>
          </thead>
          <tbody>
            {rows.map((row, i) => (
              <tr
                key={row.name}
                onClick={() => setSelected(i)}
                className={clsx(i === selected && (focused ? 'bg-[#0a7ad1] text-white outline-1 -outline-offset-1 outline-dotted outline-[#e8933c]' : 'bg-[#f0f0f0]'))}
              >
                <td className="pl-0.5 whitespace-nowrap">{row.name}</td>
                <td className="pl-1.5 whitespace-nowrap">{row.value}</td>
              </tr>
            ))}
          </tbody>
        </table>
      </div>
      <div className="w-[17px] shrink-0 pr-0.5">
        {focused && (
          <div className="flex h-full flex-col items-center bg-[#f0f0f0] text-[#555]">
            <span className="grid h-[18px] place-items-center"><ChevronUp size={10} strokeWidth={4} /></span>
            <span className="h-[62px] w-full bg-[#cdcdcd]" />
            <span className="mt-auto grid h-[18px] place-items-center"><ChevronDown size={10} strokeWidth={4} /></span>
          </div>
        )}
      </div>
    </div>
  )
}

interface DialogButtonProps {
  text: string
  hotkey?: string
  more?: boolean
  primary?: boolean
  disabled?: boolean
}

function DialogButton({ text, hotkey, more, primary, disabled }: DialogButtonProps) {
  return (
    <button
      disabled={disabled}
      className={clsx(
        'h-7 w-[84px] leading-4',
        primary ? 'border-2 border-[#0a7ad1] bg-[#e1e1e1]' : 'border',
        !primary && (disabled ? 'border-[#bfbfbf] bg-[#cccccc] text-[#8a8a8a]' : 'border-[#adadad] bg-[#e1e1e1]')
      )}
    >
      {text}
      {hotkey && <>(<u>{hotkey}</u>)</>}
      {more && '...'}
    </button>
  )
}

function EnvironmentDialog() {
  return (
    <section
      role="dialog"
      aria-label="环境变量"
      className="absolute top-[73px] left-[625px] w-[598px] bg-[#f0f0ef] text-xs text-[#111] shadow-[0_0_0_1px_rgba(60,80,90,0.7),0_6px_18px_rgba(0,0,0,0.4)]"
    >
      <header className="flex h-[29px] items-center justify-between bg-white pr-1 pl-2">
        <h1>环境变量</h1>
        <button aria-label="关闭" className="grid size-5 place-items-center"><X size={20} strokeWidth={1} /></button>
      </header>
      <div className="px-3 pt-[25px]">
        <fieldset className="min-w-0 border border-[#dcdcdc] px-[11px] pb-[15px]">
          <legend className="-ml-1.5 px-0.5 leading-4">ha 的用户变量(<u>U</u>)</legend>
          <VariableTable label="用户变量" rows={userVariables} initial={1} />
          <div className="mt-[15px] flex justify-end gap-2">
            <DialogButton text="新建" hotkey="N" more />
            <DialogButton text="编辑" hotkey="E" more />
            <DialogButton text="删除" hotkey="D" />
          </div>
        </fieldset>
        <fieldset className="mt-2.5 min-w-0 border border-[#dcdcdc] px-[11px] pb-[15px]">
          <legend className="-ml-1.5 px-0.5 leading-4">系统变量(<u>S</u>)</legend>
          <VariableTable label="系统变量" rows={systemVariables} initial={4} focused />
          <div className="mt-[15px] flex justify-end gap-2">
            <DialogButton text="新建" hotkey="W" more disabled />
            <DialogButton text="编辑" hotkey="I" more disabled />
            <DialogButton text="删除" hotkey="L" disabled />
          </div>
        </fieldset>
        <div className="mt-[17px] mr-[17px] mb-[15px] flex justify-end gap-2">
          <DialogButton text="确定" primary />
          <DialogButton text="取消" />
        </div>
      </div>
      <svg viewBox="0 0 9 9" className="absolute right-1 bottom-1 size-2" aria-hidden="true">
        <path d="M6 0h2v2H6zM6 3h2v2H6zM6 6h2v2H6zM3 3h2v2H3zM3 6h2v2H3zM0 6h2v2H0z" fill="#bdbdbd" />
      </svg>
    </section>
  )
}

/* ---------- taskbar ---------- */

function Taskbar() {
  return (
    <footer className="h-5 overflow-hidden bg-linear-to-r from-[#22373d] from-60% to-[#1a2236] text-xs text-white">
      <div className="flex h-10 items-center border-t border-[#8a9698]/60">
        <button aria-label="开始" className="grid w-[46px] place-items-center">
          <svg viewBox="0 0 16 16" className="size-4">
            <path d="M0 2l7-1v6.500H0zM8 1l8-1v7.500H8zM0 8.500h7V15l-7-1zM8 8.500h8V16l-8-1z" fill="#fff" />
          </svg>
        </button>
        <label className="flex h-10 w-[280px] items-center bg-[#f3f2ee] pl-4">
          <Search size={16} strokeWidth={2} className="-scale-x-100 text-[#333]" />
          <input aria-label="搜索" placeholder="搜索" className="ml-2 w-[160px] text-[13px] text-[#222] outline-none placeholder:text-[#333]" />
          <svg viewBox="0 0 70 40" className="ml-2 h-10 w-[70px]" aria-hidden="true">
            <circle cx="9" cy="13" r="3" fill="none" stroke="#9ccfe0" />
            <circle cx="4" cy="22" r="4" fill="none" stroke="#b6b2e0" />
            <path d="M16 18c0-12 10-16 18-14 9 2 6 10 1 11s-4 6 3 10H22c-4 0-6-3-6-7z" fill="#dcc66a" />
            <path d="M21 14c2-7 8-8 12-7-6 1-8 5-8 11z" fill="#f2e6a6" />
            <path d="M58 25q2-8 2-13 4 8 2 13z" fill="#b9d84a" />
          </svg>
        </label>
        <div className="ml-[15px] flex items-center">
          <svg viewBox="0 0 18 18" className="size-[18px]" aria-hidden="true">
            <path d="M1 2v2h10V2M1 16v-2h10v2M1 6.500h10v5H1zM15 2v14" fill="none" stroke="#e6eaea" strokeWidth="1.500" />
            <path d="M13.500 7h3v3h-3z" fill="#fff" />
          </svg>
          <Glyph kind="edge" className="ml-7 size-6" />
          <svg viewBox="0 0 22 20" className="ml-[25px] h-5 w-[22px]" aria-hidden="true">
            <path d="M1 2h8l2 3H1z" fill="#d79a1d" />
            <path d="M1 4h20v15H1z" fill="#fbd360" />
          </svg>
          <svg viewBox="0 0 24 24" className="ml-6 size-6" aria-hidden="true">
            <path d="M7 6V2h10v4" fill="none" stroke="#2aa7e6" strokeWidth="2" />
            <path d="M1 6h22v16H1z" fill="#fff" />
            <path d="M8 10h4v4H8z" fill="#e8432e" />
            <path d="M13 10h4v4h-4z" fill="#6db52c" />
            <path d="M8 15h4v4H8z" fill="#2aa7e6" />
            <path d="M13 15h4v4h-4z" fill="#f7b91c" />
          </svg>
          <svg viewBox="0 0 24 24" className="ml-6 size-6" aria-hidden="true">
            <path d="M1 12L12 2l4 3 6 7v9H1z" fill="#2b7bec" />
            <path d="M1 12L12 2l4 3-9 10z" fill="#1e4fc9" />
            <path d="M7 15l10-8 5 6-11 8z" fill="#8bbcfa" />
          </svg>
          <Glyph kind="wps" className="ml-6 size-6" />
          <Glyph kind="keil" className="ml-6 size-6" />
        </div>
        <div className="ml-auto flex items-center pr-[18px]">
          <svg viewBox="0 0 24 24" className="mr-2 size-6" aria-hidden="true">
            <path d="M1 16a9 9 0 0 1 18-1z" fill="#5bb4f2" />
            <path d="M11 3l-1 3M15 1l-1 3M15 6l-1 2M20 5l-1 3M23 9l-1 3" stroke="#7ec6f7" strokeWidth="1.500" />
          </svg>
          <span className="text-[13px]">明日有雨</span>
          <svg viewBox="0 0 10 6" className="mb-1 ml-6 h-1.5 w-2.5" aria-hidden="true">
            <path d="M1 5l4-4 4 4" fill="none" stroke="#fff" strokeWidth="1.500" />
          </svg>
          <svg viewBox="0 0 16 14" className="ml-3 h-3.5 w-4" aria-hidden="true">
            <path d="M.5 1h15v9H.5zM4 13h8" fill="none" stroke="#fff" />
            <path d="M0 0h6v5H0z" fill="#e6e8ec" />
          </svg>
          <svg viewBox="0 0 16 14" className="ml-2 h-3.5 w-4" aria-hidden="true">
            <path d="M1 5h2l3-3v10L3 9H1zM8.500 5q1.500 2 0 4M10.500 3q3 4 0 8M13 1.500q4 5.500 0 11" fill="none" stroke="#fff" />
          </svg>
          <span className="ml-2 text-sm">中</span>
          <time className="ml-2 w-16 text-center leading-[18px] whitespace-nowrap">18:08<br />2025/6/30</time>
          <svg viewBox="0 0 16 16" className="ml-3.5 size-4" aria-hidden="true">
            <path d="M0 0h16v12H8l-3 3v-3H0z" fill="#fff" />
            <path d="M3 4h10M3 7h10" stroke="#1b2634" />
          </svg>
        </div>
      </div>
    </footer>
  )
}

function Arrows() {
  return (
    <svg className="pointer-events-none absolute top-0 left-0 h-[430px] w-[1100px]" viewBox="0 0 1100 430" aria-hidden="true">
      <g fill="#fe0000" stroke="#fe0000">
        <path d="M722 375L684 228M996 405l31-26" strokeWidth="4" />
        <path d="M676 203l16 26-17 4zM1046 362l-14 24-11-14z" stroke="none" />
      </g>
    </svg>
  )
}

export default function App() {
  return (
    <div className="flex h-screen flex-col overflow-hidden bg-[#202122] font-['Noto_Sans','Noto_Sans_CJK_SC',sans-serif]">
      <div className="h-0.5 shrink-0 bg-[#c6c8c8] pl-[13px]">
        <div className="h-px w-[107px] bg-[#e0705a]" />
      </div>
      <div className="flex min-h-0 flex-1">
        <div className="w-[5px] shrink-0 border-r-2 border-[#8fa3ab] bg-[#c4c5c5]" />
        <div className="flex min-w-0 flex-1 flex-col">
          <main className="relative min-h-0 flex-1 overflow-hidden">
            <Wallpaper />
            <div className="relative grid w-[885px] auto-rows-[95px] grid-cols-12 pt-px">
              {desktopItems.map((item) => (
                <button
                  key={`${item.col}-${item.row}`}
                  style={{ gridColumn: item.col, gridRow: item.row }}
                  className="flex flex-col items-center pt-1.5"
                >
                  <Glyph kind={item.icon} shortcut={item.shortcut} className="size-[46px] shrink-0" />
                  <span className="mt-1 text-xs leading-4 whitespace-pre text-white [text-shadow:1px_1px_1px_#000,0_0_2px_#000]">{item.label}</span>
                </button>
              ))}
            </div>
            <Explorer />
            <EnvironmentDialog />
            <Arrows />
            <button
              aria-label="画中画"
              className="absolute top-[543px] right-[5px] grid h-[39px] w-[38px] place-items-center rounded-sm bg-[#0b2256] shadow-md"
            >
              <svg viewBox="0 0 24 22" className="h-[22px] w-6">
                <path d="M20 11V3q0-2-2-2H3Q1 1 1 3v14q0 2 2 2h9" fill="none" stroke="#d5e0f5" strokeWidth="2" />
                <path d="M5 5l6 6M11.500 6.500v5h-5" fill="none" stroke="#d5e0f5" strokeWidth="2" />
                <rect x="15" y="13" width="9" height="7" rx="1.500" fill="#d5e0f5" />
              </svg>
            </button>
          </main>
          <Taskbar />
        </div>
      </div>
      <div className="h-1 shrink-0 bg-[#202122]" />
    </div>
  )
}
